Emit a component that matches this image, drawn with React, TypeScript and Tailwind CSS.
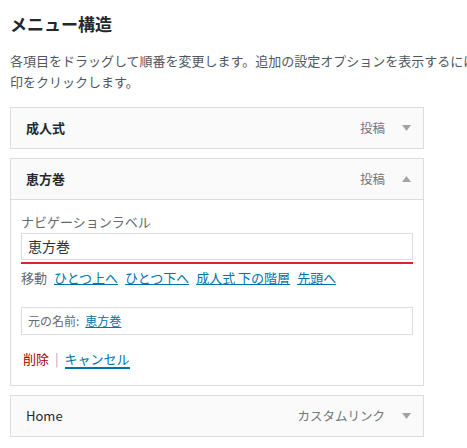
const jp = "font-['Noto_Sans_CJK_JP','Noto_Sans',sans-serif]";

const Arrow = ({ up }: { up?: boolean }) => (
  <svg width="9" height="6" viewBox="0 0 9 6" className="ml-[17px] mr-[12px]">
    {up ? (
      <polygon points="0,6 9,6 4.5,0" fill="#a0a5aa" />
    ) : (
      <polygon points="0,0 9,0 4.5,6" fill="#a0a5aa" />
    )}
  </svg>
);

const ItemHeader = ({
  title,
  type,
  up,
  bold = true,
}: {
  title: string;
  type: string;
  up?: boolean;
  bold?: boolean;
}) => (
  <div className="h-[40px] bg-[#fafafa] flex items-center pl-[15px]">
    <span
      className={`text-[13px] text-[#23282d] ${bold ? "font-bold" : "font-normal"}`}
    >
      {title}
    </span>
    <span className="ml-auto text-[12.5px] text-[#72777c]">{type}</span>
    <Arrow up={up} />
  </div>
);

export default function App() {
  return (
    <div className={`w-[467px] h-[448px] overflow-hidden bg-white ${jp}`}>
      <div className="pl-[10px] pt-[10px]">
        <h2 className="text-[17px] leading-[28px] font-bold text-[#23282d]">
          メニュー構造
        </h2>
        <div className="mt-[12px] text-[13px] leading-[21px] text-[#50575e]">
          <p className="whitespace-nowrap">
            各項目をドラッグして順番を変更します。追加の設定オプションを表示するには、右の矢
          </p>
          <p>印をクリックします。</p>
        </div>

        <div className="mt-[15px] w-[414px] flex flex-col gap-[9px]">
          <div className="border border-[#dcdcde]">
            <ItemHeader title="成人式" type="投稿" />
          </div>

          <div className="border border-[#dcdcde]">
            <ItemHeader title="恵方巻" type="投稿" up />
            <div className="border-t border-[#dcdcde] bg-white px-[10px] pt-[13px] pb-[16px]">
              <label className="block text-[13px] leading-[18px] text-[#646970]">
                ナビゲーションラベル
              </label>
              <div className="mt-[2px]">
                <div className="h-[27px] border border-[#dcdcde] flex items-center px-[6px] text-[14px] text-[#2c3338]">
                  恵方巻
                </div>
                <div className="mt-[2px] h-[2px] bg-[#e02424]" />
              </div>
              <div className="mt-[4px] flex items-center gap-[7px] text-[13px] leading-[20px]">
                <span className="text-[#646970]">移動</span>
                <a className="text-[#0073aa] underline">ひとつ上へ</a>
                <a className="text-[#0073aa] underline">ひとつ下へ</a>
                <a className="text-[#0073aa] underline">成人式 下の階層</a>
                <a className="text-[#0073aa] underline">先頭へ</a>
              </div>

              <div className="mt-[19px] h-[28px] border border-[#dcdcde] flex items-center px-[6px] text-[12px]">
                <span className="text-[#646970]">元の名前:</span>
                <a className="ml-[6px] text-[#0073aa] underline">恵方巻</a>
              </div>

              <div className="mt-[14px] flex items-center text-[13px] leading-[20px]">
                <a className="ml-[2px] text-[#a00]">削除</a>
                <span className="mx-[6px] text-[#c3a0a8]">|</span>
                <a className="text-[#0073aa] border-b-2 border-[#0073aa] leading-[17px]">
                  キャンセル
                </a>
              </div>
            </div>
          </div>

          <div className="border border-[#dcdcde]">
            <ItemHeader title="Home" type="カスタムリンク" bold={false} />
          </div>
        </div>
      </div>
    </div>
  );
}
